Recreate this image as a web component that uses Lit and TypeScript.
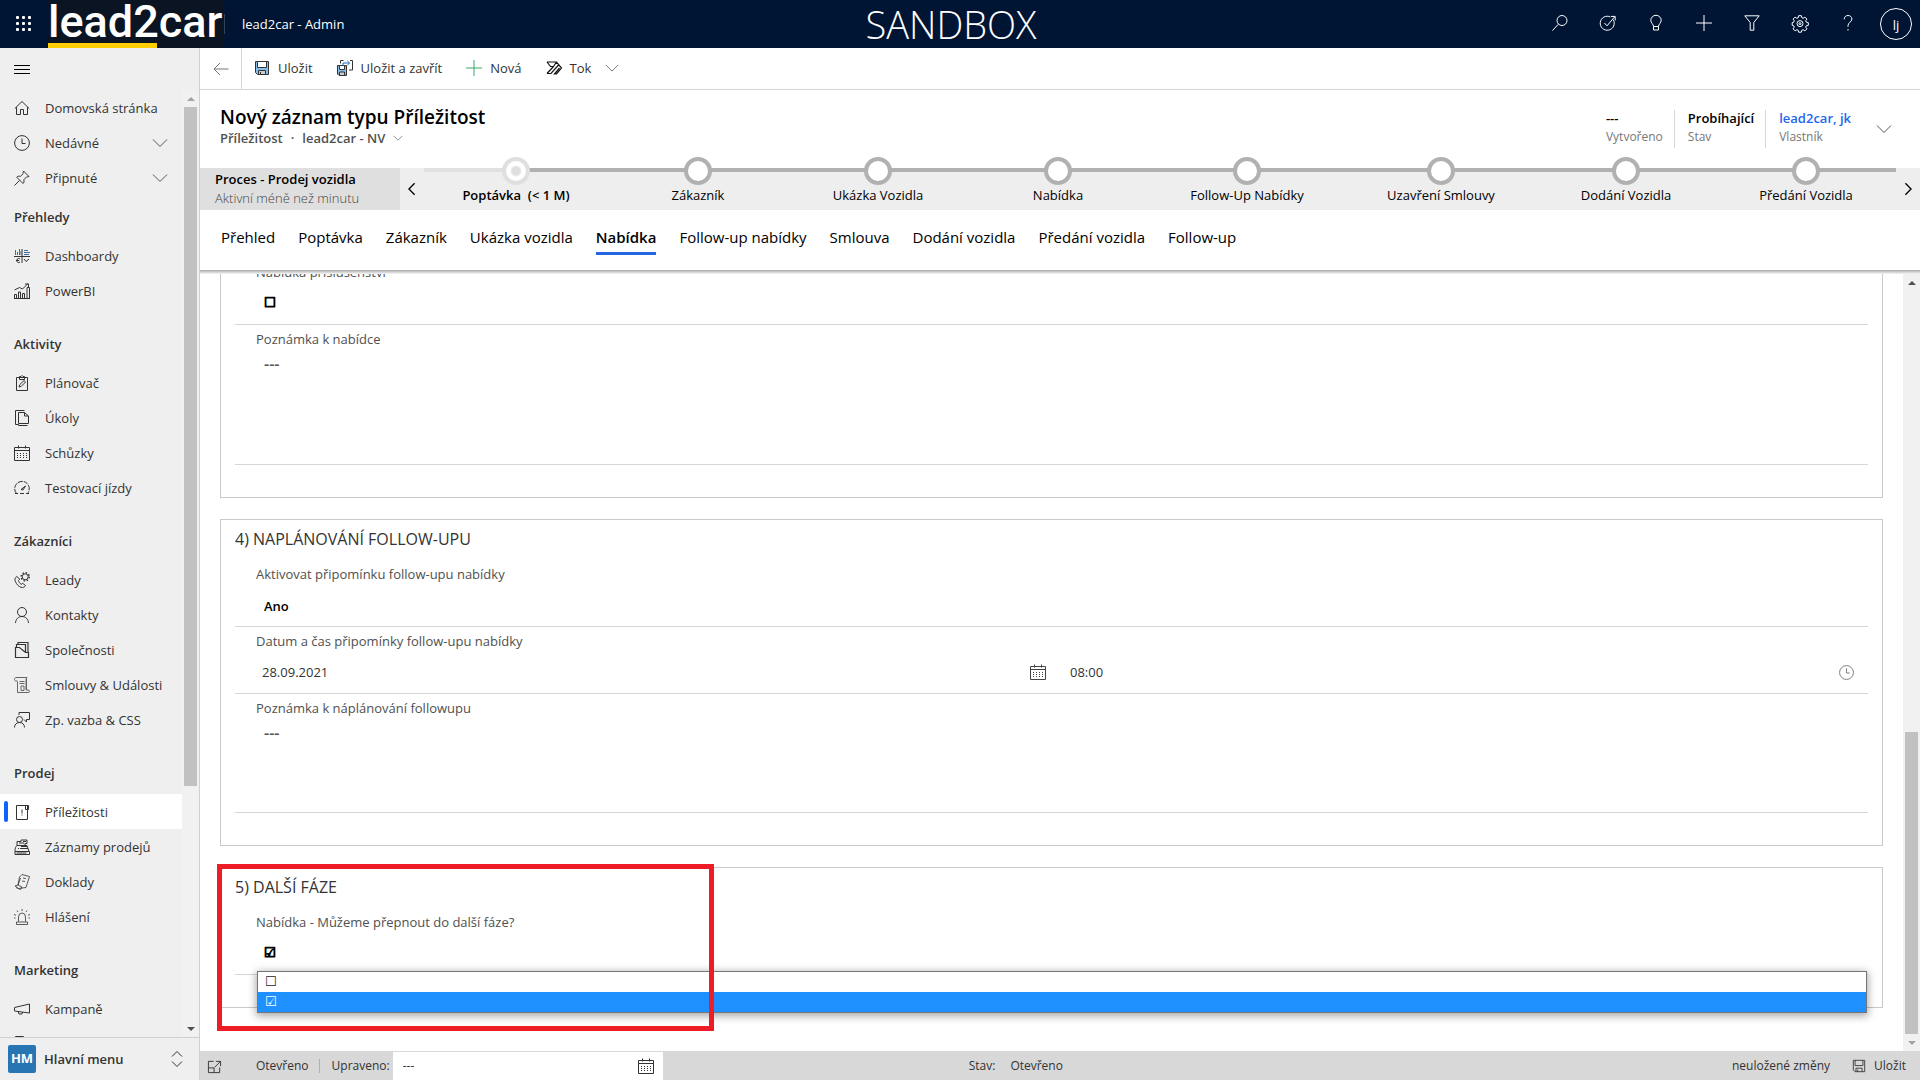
import { LitElement, html, svg, css, nothing, TemplateResult } from "lit";
import { customElement, property } from "lit/decorators.js";
import { classMap } from "lit/directives/class-map.js";
import { styleMap } from "lit/directives/style-map.js";

const ICONS: Record<string, TemplateResult> = {
  waffle: svg`<g fill="currentColor" stroke="none">${[1, 7, 13].map((y) =>
    [1, 7, 13].map((x) => svg`<rect x=${x - 1} y=${y - 1} width="3" height="3" rx="1"/>`)
  )}</g>`,
  burger: svg`<path d="M0 3.5h16M0 7.5h16M0 11.5h16"/>`,
  search: svg`<circle cx="10" cy="5.5" r="5"/><path d="M6.3 9.3L.4 15.6"/>`,
  target: svg`<path d="M13.2 4.6A7 7 0 1 1 10.4 2"/><path d="M4.4 8l2.6 2.8L14.5 2M11 1.4h4.2v4"/>`,
  bulb: svg`<path d="M5.5 11.5c0-2.5-2.7-3.300-2.700-6.200a5.200 5 0 0 1 10.400 0c0 2.900-2.700 3.700-2.700 6.200zM5.500 11.500v3.500h5v-3.500"/>`,
  plus: svg`<path d="M8 0v16M0 8h16"/>`,
  filter: svg`<path d="M.8.8h14.400l-5.400 6.700v7.700h-3.600V7.500z"/>`,
  gear: svg`<path d="M6.600.7h2.800l.4 2 1.300.6 1.800-1.200 2 2-1.200 1.800.6 1.300 2 .4v2.800l-2 .4-.6 1.300 1.200 1.800-2 2-1.800-1.200-1.300.6-.4 1.900H6.600l-.4-1.900-1.300-.6-1.800 1.200-2-2 1.200-1.800-.6-1.300-1.500-.4V7.600l1.500-.4.600-1.300L1.100 4.100l2-2 1.800 1.200 1.300-.6z"/><circle cx="8" cy="8.600" r="3"/><circle cx="8" cy="8.600" r="1"/>`,
  help: svg`<path d="M4.200 4.300C4.200 2 5.800.5 8 .5s3.900 1.400 3.900 3.500c0 2.900-3.900 3.500-3.900 6.600v1.200M8 14v1.500"/>`,
  back: svg`<path d="M7 2L1 8l6 6M1 8h14.500" stroke="#767676"/>`,
  save: svg`<path d="M1.500 1.500h13v13h-11l-2-2z" fill="#83beec" stroke="#333"/><path d="M3.500 1.500h9v6h-9z" fill="#fff" stroke="#333"/><path d="M4.500 10.500h7v4h-7z" fill="#ccc" stroke="#333"/><path d="M6.500 12v2.500" stroke="#333"/>`,
  saveGrey: svg`<path d="M1.500 1.500h13v13h-11l-2-2zM3.500 1.500v6h9v-6M4.500 14.500v-4h7v4M6.500 12v2.500"/>`,
  saveClose: svg`<path d="M.5 5.500h9v10h-7.500l-1.500-1.500z" fill="#83beec" stroke="#333"/><path d="M2.500 5.500h5v4h-5z" fill="#fff" stroke="#333"/><path d="M2.500 12h5v3.500h-5z" fill="#ccc" stroke="#333"/><path d="M6.500.5h-3v3M13 .5h2.500v9.500h-3.500" stroke="#333"/><path d="M6 6V3h6.500M10.300.8L12.600 3l-2.300 2.200" stroke="#1d6fc0"/>`,
  add: svg`<path d="M8 0v16M0 8h16" stroke="#3aa76d"/>`,
  flow: svg`<path d="M1 2h9.500l5 6-5 6H8.500l5-6M1 2l3.500 4.500h3L10.500 2M1 13.500h4L13 4.500M1 13.500L7.500 6.500" stroke="#111" stroke-width="1.200"/>`,
  down: svg`<path d="M1 4.500l7 7 7-7"/>`,
  left: svg`<path d="M11 1.500L4.500 8l6.500 6.500" stroke-width="1.500"/>`,
  right: svg`<path d="M5 1.500L11.500 8 5 14.500" stroke-width="1.500"/>`,
  updown: svg`<path d="M3 5.500L8 .5l5 5M3 10.500l5 5 5-5"/>`,
  home: svg`<path d="M.8 8.500L8 1.500l7.200 7M2.500 7.200v7.300h4V9.500h3v5h4V7.200"/>`,
  clock: svg`<circle cx="8" cy="8" r="7.400"/><path d="M8 3.500V8.500h3.500"/>`,
  pin: svg`<path d="M9.500 1L15 6.500c-1.200.6-2.300.3-2.300.3L9.800 9.700c.6 1.700 0 3.300-.8 3.800L2.700 7.200c.6-.8 2-1.400 3.700-.8L9.300 3.500S8.900 2.200 9.500 1zM5.600 10.400L.5 15.500"/>`,
  dash: svg`<path d="M0 8.500h16M8 1v14"/><path d="M1.500 7V2M3.500 7V4M5.500 7V1M7 7V3M10 2.500h4M10 4.500h6M10 6.500h5" stroke="#3f6f9f"/><path d="M6 11a2 2 0 1 0 0 3M2 12.500h3M10 11l2 2.500 3-2.500"/>`,
  chart: svg`<path d="M.5 15.500v-4h2v4zM4.500 15.500V9h2v6.500zM8.500 15.500v-5h2v5zM13 15.500V4.500h2.500v11zM0 15.500h16M.5 7l5-2.500L8.500 6 14 .5M11 1h3.500v3"/>`,
  clip: svg`<path d="M2.500 2.500h11v13h-11zM5.500 4.500v-3h1.500l1-1 1 1h1.500v3zM5 12l.7-2.300L10 5.500l1.600 1.500-4.300 4.300z"/>`,
  pages: svg`<path d="M4.500 13.500h10V6l-4-3.500h-6zM10.500 2.500V6h4M10.500.5h-9v14h3v1h9"/>`,
  cal: svg`<path d="M.5 2.500h15v13H.5zM.5 5.500h15M4.500.5v3M11.500.5v3"/><path d="M3 8.500h11M3 10.500h11M3 12.500h11" stroke-dasharray="1 2"/>`,
  gauge: svg`<path d="M2.500 13.500A7.300 7.300 0 1 1 13.500 13.500" stroke-dasharray="5 1"/><path d="M1 13.500h3M6 13.500h4M12 13.500h3M7 9.500L11.500 6 9 10z"/>`,
  lead: svg`<path d="M2.800 4.500C1 5.500.5 7.300 1.300 9.300c1.200 3 3.300 5.200 5.700 6 2 .6 3.600 0 4.500-1.800L8.700 11.300l-1.500 1C5.600 11.300 4.800 9.800 4.500 8.400l1.300-1.200z"/><circle cx="11.200" cy="4.800" r="3"/><circle cx="11.200" cy="4.800" r="4.100" stroke-dasharray="1.600 1.600" stroke-width="1.400"/>`,
  person: svg`<circle cx="8" cy="5" r="4.500"/><path d="M1.500 16c.2-4 3-6.500 6.500-6.500s6.300 2.500 6.500 6.500"/>`,
  company: svg`<path d="M1.500 5.500v10h13v-5h-3L5.500 5.500zM2.500 5.500v-3h9v8M4 2.500v-2h10v10" stroke-width="1.200"/>`,
  contract: svg`<path d="M3.500 4.500v11h10.500c2 0 2-2.500 0-2.500h-2v-10c0-1.500 1-2.500 1-2.500H2C0 .5 0 4 2 4h1.500M5.500 4.500h5M5.500 6.500h5M7 9h3v4.500H7zM12.500 13V.5" stroke="#666"/>`,
  feedback: svg`<circle cx="5.500" cy="7.500" r="3"/><path d="M.5 15.500c0-3 2-5 5-5s5 2 5 5M5 3V.5h10.500v7h-3v2.500l-2.500-2.500"/>`,
  opp: svg`<path d="M2.500 1.500h11v14h-11zM11.500 2v3.500h3V1.500h-2M8 5.500v4M8 10.500v1"/>`,
  register: svg`<path d="M1 12.500h14.500v3H1zM1 12.500c0-3 .5-5 2-6h10l2 6M3 6V2.500h4V1h6v3.500h-2V6M5 4h5M9 2.500h3M6 9.500h8M7 7.500h6M4 9.500h1M2.500 14h10"/>`,
  docs: svg`<path d="M5.500 3L8 .5l7.500 2-3.500 11-7.500 1L1 12l3-1zM4 11l4 2-1.500 2.500L2 13.500M4 11l2.500-7M9 4l3 .5M8 7l3 .5" stroke-width=".8"/>`,
  alarm: svg`<path d="M4.500 12.500V8a3.500 4 0 0 1 7 0v4.500M2.500 15.500v-2.500h11v2.500zM8 0v2M3 1.500l1 1.500M13 1.500L12 3M0 5.500l2 .7M16 5.500l-2 .7M0 9h1.500M14.500 9H16" stroke-width=".8"/>`,
  horn: svg`<path d="M.5 6.500v3.500l15 2v-9zM4 10.500l1 2.500h3l.5-2"/>`,
  file: svg`<path d="M1.500 16V.5h8v2h2.500V16"/>`,
  popout: svg`<path d="M7 2.500H1.500v12h12V9M9.500 2.500h5v5M14.500 2.500L8 9M1.500 9.500h6v5"/>`,
  triUp: svg`<path d="M4 10l4-4 4 4z" fill="currentColor" stroke="none"/>`,
  triDown: svg`<path d="M4 6l4 4 4-4z" fill="currentColor" stroke="none"/>`,
};

const icon = (name: string, size = 16) => html`<svg
  width=${size} height=${size} viewBox="0 0 16 16" fill="none" stroke="currentColor" aria-hidden="true"
>${ICONS[name]}</svg>`;

const base = css`
  *, *::before { box-sizing: border-box; }
  svg { display: block; flex: none; overflow: visible; }
  button { font: inherit; color: inherit; background: none; border: 0; padding: 0; margin: 0; display: flex; align-items: center; cursor: pointer; }
  a { color: inherit; text-decoration: none; }
  input, select, textarea { font: inherit; color: inherit; background: none; border: 0; padding: 0; margin: 0; outline: 0; min-width: 0; appearance: none; resize: none; }
  h1, h2, ul { margin: 0; padding: 0; font: inherit; list-style: none; }
`;

@customElement("scroll-rail")
class ScrollRail extends LitElement {
  @property({ type: Number }) before = 0;
  @property({ type: Number }) thumb = 50;
  @property({ type: Number }) after = 50;
  static styles = [base, css`
    :host { display: flex; flex-direction: column; width: 17px; flex: none; background: #f1f1f1; color: #505050; }
    .arrow { height: 17px; flex: none; display: grid; place-items: center; }
    .dim { color: #a3a3a3; }
    .thumb { background: #c1c1c1; margin: 0 2px; }
  `];
  render() {
    return html`
      <div class=${classMap({ arrow: true, dim: !this.before })}>${icon("triUp")}</div>
      <div style=${styleMap({ flex: `${this.before} 0 0` })}></div>
      <div class="thumb" style=${styleMap({ flex: `${this.thumb} 0 0` })}></div>
      <div style=${styleMap({ flex: `${this.after} 0 0` })}></div>
      <div class=${classMap({ arrow: true, dim: !this.after })}>${icon("triDown")}</div>
    `;
  }
}

@customElement("top-bar")
class TopBar extends LitElement {
  static styles = [base, css`
    :host { display: flex; align-items: center; height: 48px; background: #001433; color: #fff; position: relative; }
    .waffle { width: 48px; height: 48px; justify-content: center; }
    .logo { width: 176px; height: 48px; background: #0a1422; font: 500 45px/43px Roboto, sans-serif; white-space: nowrap; }
    .logo::after { content: ""; display: block; width: 109px; height: 5px; background: #ffcd00; }
    .app { border-left: 1px solid #33435c; height: 20px; line-height: 20px; padding-left: 17px; }
    .env { position: absolute; left: 50%; transform: translateX(-50%); margin-left: -9px; font-size: 38px; line-height: 48px; font-weight: 300; }
    .tools { margin-left: auto; display: flex; }
    .tools button { width: 48px; height: 46px; justify-content: center; }
    .tools .me { height: 48px; }
    .me span { width: 32px; height: 32px; border: 1px solid #fff; border-radius: 50%; line-height: 32px; font-size: 13px; }
  `];
  render() {
    const tools = [["search", "Hledat"], ["target", "Úkoly"], ["bulb", "Tipy"], ["plus", "Vytvořit"], ["filter", "Filtr"], ["gear", "Nastavení"], ["help", "Nápověda"]];
    return html`
      <button class="waffle" aria-label="Aplikace">${icon("waffle")}</button>
      <div class="logo">lead2car</div>
      <div class="app">lead2car - Admin</div>
      <div class="env">SANDBOX</div>
      <div class="tools">
        ${tools.map(([i, l]) => html`<button aria-label=${l}>${icon(i)}</button>`)}
        <button class="me" aria-label="Účet"><span>lj</span></button>
      </div>
    `;
  }
}

type Link = { icon: string; text: string; more?: boolean; on?: boolean };
const GROUPS: { title?: string; links: Link[] }[] = [
  { links: [{ icon: "home", text: "Domovská stránka" }, { icon: "clock", text: "Nedávné", more: true }, { icon: "pin", text: "Připnuté", more: true }] },
  { title: "Přehledy", links: [{ icon: "dash", text: "Dashboardy" }, { icon: "chart", text: "PowerBI" }] },
  { title: "Aktivity", links: [{ icon: "clip", text: "Plánovač" }, { icon: "pages", text: "Úkoly" }, { icon: "cal", text: "Schůzky" }, { icon: "gauge", text: "Testovací jízdy" }] },
  { title: "Zákazníci", links: [{ icon: "lead", text: "Leady" }, { icon: "person", text: "Kontakty" }, { icon: "company", text: "Společnosti" }, { icon: "contract", text: "Smlouvy & Události" }, { icon: "feedback", text: "Zp. vazba & CSS" }] },
  { title: "Prodej", links: [{ icon: "opp", text: "Příležitosti", on: true }, { icon: "register", text: "Záznamy prodejů" }, { icon: "docs", text: "Doklady" }, { icon: "alarm", text: "Hlášení" }] },
  { title: "Marketing", links: [{ icon: "horn", text: "Kampaně" }, { icon: "file", text: "" }] },
];

@customElement("side-nav")
class SideNav extends LitElement {
  static styles = [base, css`
    :host { display: flex; flex-direction: column; min-height: 0; background: #efefef; border-right: 1px solid #d0d0d0; color: #333; }
    .burger { height: 42px; padding: 2px 0 0 14px; color: #000; flex: none; }
    .scroll { flex: 1; min-height: 0; display: flex; }
    .list { flex: 1; min-width: 0; overflow: hidden; }
    .group + .group { padding-top: 14px; }
    .group.tight { padding-top: 0; }
    h2 { height: 43px; line-height: 45px; padding-left: 14px; font-weight: 600; font-size: 13px; }
    .link { display: flex; align-items: center; gap: 15px; height: 35px; padding: 0 14px; position: relative; white-space: nowrap; }
    .link .more { margin-left: auto; color: #555; }
    .on { background: #fff; }
    .on::before { content: ""; position: absolute; left: 4px; top: 7px; width: 4px; height: 21px; border-radius: 2px; background: #0f62fe; }
    .area { height: 43px; flex: none; border-top: 1px solid #d0d0d0; padding: 0 14px 0 8px; gap: 8px; font-weight: 600; text-align: left; }
    .badge { width: 28px; height: 28px; line-height: 26px; text-align: center; background: #2875b3; color: #fff; border-radius: 2px; font-weight: 700; }
    .area svg { margin-left: auto; }
  `];
  render() {
    return html`
      <button class="burger" aria-label="Nabídka">${icon("burger")}</button>
      <div class="scroll">
        <nav class="list">
          ${GROUPS.map((g, n) => html`<div class=${classMap({ group: true, tight: n < 2 })}>
            ${g.title ? html`<h2>${g.title}</h2>` : nothing}
            ${g.links.map((l) => html`<a href="#" class=${classMap({ link: true, on: !!l.on })}>
              ${icon(l.icon)}<span>${l.text}</span>${l.more ? html`<span class="more">${icon("down")}</span>` : nothing}
            </a>`)}
          </div>`)}
        </nav>
        <scroll-rail .before=${0} .thumb=${679} .after=${234}></scroll-rail>
      </div>
      <button class="area"><span class="badge">HM</span><span>Hlavní menu</span>${icon("updown")}</button>
    `;
  }
}

const STAGES = [
  { text: "Poptávka  (< 1 M)", share: 184, now: true },
  { text: "Zákazník", share: 180 },
  { text: "Ukázka Vozidla", share: 180 },
  { text: "Nabídka", share: 180 },
  { text: "Follow-Up Nabídky", share: 198 },
  { text: "Uzavření Smlouvy", share: 190 },
  { text: "Dodání Vozidla", share: 180 },
  { text: "Předání Vozidla", share: 180 },
];
const TABS = ["Přehled", "Poptávka", "Zákazník", "Ukázka vozidla", "Nabídka", "Follow-up nabídky", "Smlouva", "Dodání vozidla", "Předání vozidla", "Follow-up"];

@customElement("record-head")
class RecordHead extends LitElement {
  static styles = [base, css`
    :host { display: block; flex: none; background: #fff; color: #333; }
    .cmd { display: flex; align-items: stretch; height: 42px; border-bottom: 1px solid #d6d6d6; }
    .back { width: 42px; justify-content: center; border-right: 1px solid #d6d6d6; }
    .acts { display: flex; gap: 24px; padding-left: 12px; }
    .acts button { gap: 8px; padding-bottom: 2px; }
    .acts .down { margin-left: 6px; color: #666; }
    .title { display: flex; align-items: flex-start; height: 78px; padding: 15px 28px 0 20px; }
    h1 { font-size: 19px; line-height: 24px; font-weight: 600; color: #000; }
    .sub { display: flex; align-items: center; gap: 8px; line-height: 18px; font-weight: 600; color: #505050; }
    .facts { margin-left: auto; display: flex; margin-top: 5px; }
    .fact { height: 38px; padding: 0 11px 0 13px; border-left: 1px solid #d6d6d6; line-height: 16px; font-weight: 600; color: #000; }
    .fact:first-child { border: 0; }
    .fact small { display: block; font-size: 12px; line-height: 22px; font-weight: 400; color: #777; }
    .fact a { color: #2266ee; }
    .facts button { margin-left: 14px; color: #555; }
    .flow { display: flex; height: 42px; background: #eee; color: #000; }
    .proc { width: 200px; flex: none; background: #dfdfdf; padding: 2px 15px; line-height: 19px; }
    .proc b { font-weight: 600; display: block; }
    .proc span { color: #444; font-weight: 300; }
    .step { width: 24px; justify-content: center; flex: none; }
    .stages { flex: 1; display: flex; }
    .stage { position: relative; border-top: 4px solid #b1b1b1; display: flex; justify-content: center; padding-top: 13px; line-height: 20px; white-space: pre; color: #000; }
    .stage::before { content: ""; position: absolute; left: 50%; top: -15px; width: 28px; height: 28px; margin-left: -14px; border: 4px solid #b1b1b1; border-radius: 50%; background: #fff; }
    .stage.now { font-weight: 600; border-image: linear-gradient(90deg, #e0e0e0 50%, #b1b1b1 50%) 1; border-width: 4px 0 0; border-style: solid; }
    .stage.now::before { border-color: #dfdfdf; background: radial-gradient(#dfdfdf 4px, #fff 6px); }
    .tabs { display: flex; gap: 23px; height: 60px; padding: 12px 21px 0; color: #000; font-size: 15px; line-height: 30px; }
    .tabs a.on { font-weight: 600; border-bottom: 3px solid #2266e3; height: 33px; }
    .edge { height: 4px; background: linear-gradient(#a9a9a9, #c8c8c8 40%, #f6f6f6); }
  `];
  render() {
    return html`
      <div class="cmd">
        <button class="back" aria-label="Zpět">${icon("back")}</button>
        <div class="acts">
          <button>${icon("save")}Uložit</button>
          <button>${icon("saveClose")}Uložit a zavřít</button>
          <button>${icon("add")}Nová</button>
          <button>${icon("flow")}Tok<span class="down">${icon("down", 14)}</span></button>
        </div>
      </div>
      <div class="title">
        <div>
          <h1>Nový záznam typu Příležitost</h1>
          <div class="sub"><span>Příležitost</span><span>·</span><span>lead2car - NV</span>${icon("down", 10)}</div>
        </div>
        <div class="facts">
          <div class="fact">---<small>Vytvořeno</small></div>
          <div class="fact">Probíhající<small>Stav</small></div>
          <div class="fact"><a href="#">lead2car, jk</a><small>Vlastník</small></div>
          <button aria-label="Více">${icon("down")}</button>
        </div>
      </div>
      <div class="flow">
        <div class="proc"><b>Proces - Prodej vozidla</b><span>Aktivní méně než minutu</span></div>
        <button class="step" aria-label="Předchozí">${icon("left", 14)}</button>
        <div class="stages">${STAGES.map((s) => html`<a href="#" class=${classMap({ stage: true, now: !!s.now })} style=${styleMap({ flex: `${s.share} 1 0` })}>${s.text}</a>`)}</div>
        <button class="step" aria-label="Další">${icon("right", 14)}</button>
      </div>
      <nav class="tabs">${TABS.map((t) => html`<a href="#" class=${classMap({ on: t === "Nabídka" })}>${t}</a>`)}</nav>
      <div class="edge"></div>
    `;
  }
}

@customElement("record-form")
class RecordForm extends LitElement {
  static styles = [base, css`
    :host { flex: 1; min-height: 0; display: flex; background: #fff; color: #333; }
    .view { flex: 1; min-width: 0; overflow: hidden; display: flex; flex-direction: column; justify-content: flex-end; gap: 21px; padding: 0 20px 43px 20px; }
    .panel { flex: none; border: 1px solid #c9c9c9; padding: 0 14px 32px; position: relative; }
    h2 { font-size: 16px; line-height: 20px; padding: 9px 0 11px; }
    .field { min-height: 67px; border-bottom: 1px solid #d6d6d6; padding: 4px 0 0 21px; position: relative; display: flex; flex-direction: column; }
    label { line-height: 20px; color: #505050; align-self: flex-start; }
    .value { margin: 12px 0 0 8px; height: 20px; line-height: 20px; }
    select.value { font-weight: 600; color: #000; }
    select.tick { font-family: "DejaVu Sans", sans-serif; font-size: 13px; -webkit-text-stroke: 1px #000; margin-top: 11px; }
    textarea { margin: 5px 0 0 8px; font-size: 16px; line-height: 20px; height: 110px; display: block; color: #555; font-weight: 600; }
    textarea.low { height: 89px; }
    .pair { display: grid; grid-template-columns: 1fr 1fr; margin: 11px 14px 0 6px; column-gap: 24px; }
    .pair div { display: flex; height: 20px; }
    .pair input { flex: 1; }
    .pair button { color: #777; }
    .pair div:first-child button { color: #444; }
    .pop { position: absolute; z-index: 1; left: 22px; right: 1px; top: 63px; border: 1px solid #767676; background: #fff; box-shadow: 0 2px 8px 1px rgba(0, 0, 0, .35); font: 13px/20px "DejaVu Sans", sans-serif; }
    .pop li { height: 20px; padding-left: 7px; color: #222; }
    .pop .on { background: #1e90ff; color: #fff; }
    .mark { position: absolute; z-index: 2; left: -4px; top: -4px; width: 497px; height: 167px; border: 5px solid #ee1c24; pointer-events: none; }
  `];
  render() {
    return html`
      <div class="view">
        <section class="panel">
          <div class="field">
            <label for="acc">Nabídka příslušenství</label>
            <select id="acc" class="value tick"><option selected>☐</option><option>☑</option></select>
          </div>
          <div class="field">
            <label for="note">Poznámka k nabídce</label>
            <textarea id="note" .value=${"---"}></textarea>
          </div>
        </section>
        <section class="panel">
          <h2>4) NAPLÁNOVÁNÍ FOLLOW-UPU</h2>
          <div class="field">
            <label for="rem">Aktivovat připomínku follow-upu nabídky</label>
            <select id="rem" class="value"><option selected>Ano</option><option>Ne</option></select>
          </div>
          <div class="field">
            <label for="date">Datum a čas připomínky follow-upu nabídky</label>
            <div class="pair">
              <div><input id="date" type="text" .value=${"28.09.2021"}><button aria-label="Kalendář">${icon("cal")}</button></div>
              <div><input type="text" aria-label="Čas připomínky" .value=${"08:00"}><button aria-label="Vybrat čas">${icon("clock", 15)}</button></div>
            </div>
          </div>
          <div class="field">
            <label for="plan">Poznámka k náplánování followupu</label>
            <textarea id="plan" class="low" .value=${"---"}></textarea>
          </div>
        </section>
        <section class="panel">
          <h2>5) DALŠÍ FÁZE</h2>
          <div class="field">
            <label for="next">Nabídka - Můžeme přepnout do další fáze?</label>
            <select id="next" class="value tick"><option>☐</option><option selected>☑</option></select>
            <ul class="pop" role="listbox" aria-label="Další fáze">
              <li role="option" aria-selected="false">☐</li>
              <li role="option" aria-selected="true" class="on">☑</li>
            </ul>
          </div>
          <div class="mark"></div>
        </section>
      </div>
      <scroll-rail .before=${441} .thumb=${302} .after=${0}></scroll-rail>
    `;
  }
}

@customElement("status-bar")
class StatusBar extends LitElement {
  static styles = [base, css`
    :host { display: flex; align-items: center; height: 29px; flex: none; background: #d8d8d8; color: #333; font-size: 12px; padding: 1px 14px 0 7px; }
    .state { margin-left: 34px; padding-right: 10px; border-right: 1px solid #b0b0b0; line-height: 14px; }
    label { margin: 0 3px 0 12px; }
    .date { width: 270px; height: 28px; background: #fff; padding: 0 9px 0 10px; display: flex; align-items: center; }
    .date input { flex: 1; }
    .mid { margin-left: 306px; display: flex; gap: 15px; }
    .end { margin-left: auto; display: flex; align-items: center; gap: 22px; }
    .end button { gap: 8px; }
  `];
  render() {
    return html`
      <button aria-label="Otevřít v novém okně">${icon("popout", 15)}</button>
      <span class="state">Otevřeno</span>
      <label for="mod">Upraveno:</label>
      <div class="date"><input id="mod" type="text" .value=${"---"}><button aria-label="Kalendář">${icon("cal")}</button></div>
      <div class="mid"><span>Stav:</span><span>Otevřeno</span></div>
      <div class="end"><span>neuložené změny</span><button>${icon("saveGrey", 14)}Uložit</button></div>
    `;
  }
}

@customElement("app-root")
class AppRoot extends LitElement {
  static styles = [base, css`
    :host { display: flex; flex-direction: column; height: 100vh; overflow: hidden; background: #fff; font: 13px/20px "Open Sans", "Noto Sans", sans-serif; }
    .body { flex: 1; min-height: 0; display: grid; grid-template-columns: 200px minmax(0, 1fr); }
    main { display: flex; flex-direction: column; min-height: 0; min-width: 0; }
  `];
  render() {
    return html`
      <top-bar></top-bar>
      <div class="body">
        <side-nav></side-nav>
        <main>
          <record-head></record-head>
          <record-form></record-form>
          <status-bar></status-bar>
        </main>
      </div>
    `;
  }
}
